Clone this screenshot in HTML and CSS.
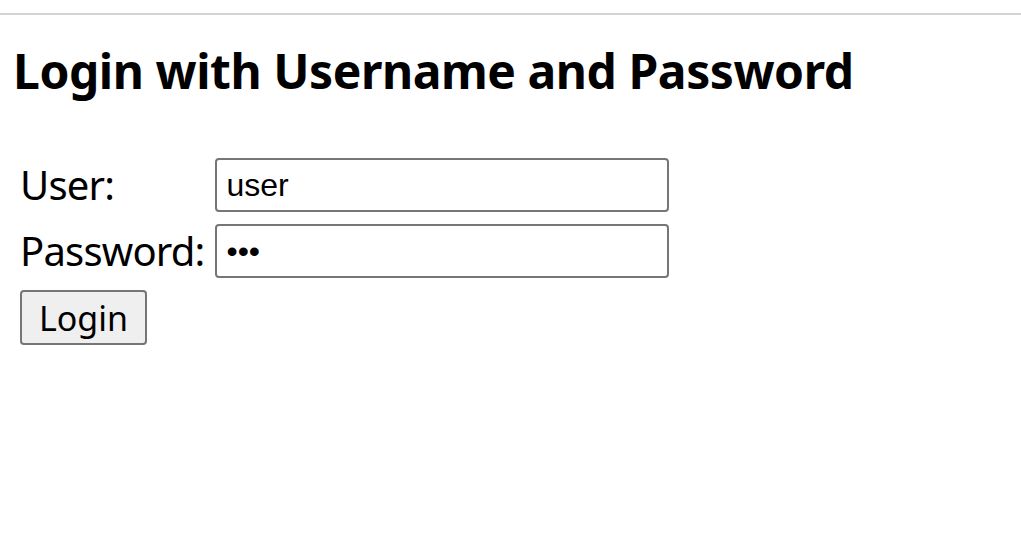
FILE: index.html
```html
<!DOCTYPE html>
<html>
<head>
    <title>Login</title>
    <link rel="stylesheet" href="styles.css">
</head>
<body>
    <hr class="top-rule">
    <h1>Login with Username and Password</h1>

    <form class="login-form" onsubmit="return false;">
        <label for="user">User:</label>
        <input type="text" id="user" name="username" value="user">

        <label for="pass">Password:</label>
        <input type="password" id="pass" name="password" value="abc">

        <div class="actions">
            <button type="submit">Login</button>
        </div>
    </form>
</body>
</html>
```

FILE: styles.css
```css
body {
    margin: 0;
    background: #ffffff;
    color: #000000;
    font-family: "Noto Sans", sans-serif;
}
.top-rule {
    border: none;
    border-top: 2px solid #d3d3d3;
    margin: 13px 0 0 0;
}
h1 {
    font-size: 48px;
    font-weight: bold;
    margin: 24px 0 0 13px;
    line-height: 64px;
    letter-spacing: -0.45px;
}
.login-form {
    display: grid;
    grid-template-columns: auto 454px;
    column-gap: 11px;
    row-gap: 12px;
    justify-content: start;
    align-items: center;
    margin: 55px 0 0 20px;
}
.login-form label {
    font-size: 40px;
    line-height: 54px;
    letter-spacing: -0.8px;
}
.login-form input {
    box-sizing: border-box;
    height: 54px;
    width: 454px;
    margin: 0;
    border: 2px solid #767676;
    border-radius: 4px;
    padding: 0 9px;
    font-family: "Liberation Sans", Arial, sans-serif;
    font-size: 32px;
}
.actions {
    grid-column: 1 / 3;
}
button {
    box-sizing: border-box;
    height: 55px;
    width: 127px;
    margin: 0;
    background: #efefef;
    border: 2px solid #767676;
    border-radius: 4px;
    font-family: "Noto Sans", sans-serif;
    font-size: 34px;
    padding: 0;
    color: #000000;
}
```
